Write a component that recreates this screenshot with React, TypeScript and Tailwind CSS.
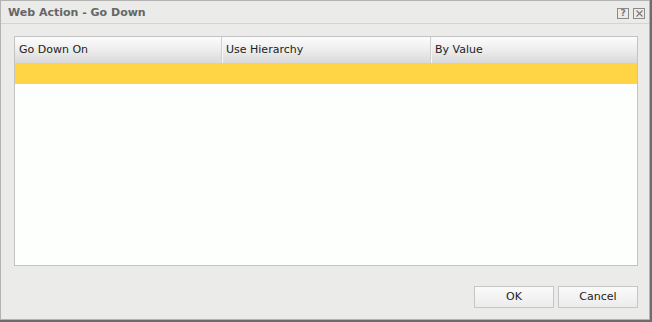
import React from "react";

const font = { fontFamily: '"DejaVu Sans", Verdana, sans-serif' };

function HeaderCell({ label, last }: { label: string; last?: boolean }) {
  return (
    <div
      className={`flex h-full items-center pl-[4px] text-[11px] text-[#222] ${
        last ? "flex-1" : "border-r border-r-[#cfcfcf] shadow-[1px_0_0_#f7f7f7]"
      }`}
    >
      {label}
    </div>
  );
}

export default function App() {
  return (
    <div className="h-[322px] w-[652px] overflow-hidden" style={font}>
      <div className="flex h-full w-full flex-col border-b-2 border-r-2 border-b-[#6c6c6c] border-r-[#6c6c6c]">
        <div className="flex h-full w-full flex-col border border-[#b3b3b3] bg-[#ebebe9]">
          {/* Title bar */}
          <div className="flex h-[23px] shrink-0 items-center justify-between border-b border-b-[#d4d4d2] pl-[7px] pr-[4px] pt-[3px]">
            <span className="text-[11px] font-bold text-[#666]">Web Action - Go Down</span>
            <div className="flex items-center gap-[4px]">
              <div className="flex h-[11px] w-[12px] items-center justify-center border border-[#8a8a8a] text-[9px] font-bold leading-none text-[#777]">
                ?
              </div>
              <div className="flex h-[11px] w-[12px] items-center justify-center border border-[#8a8a8a]">
                <svg width="7" height="7" viewBox="0 0 7 7">
                  <path d="M0.5 0.5 L6.5 6.5 M6.5 0.5 L0.5 6.5" stroke="#777" strokeWidth="1.1" />
                </svg>
              </div>
            </div>
          </div>

          {/* Body */}
          <div className="flex flex-1 flex-col pl-[13px] pr-[11px] pt-[12px]">
            <div className="flex h-[230px] flex-col border border-[#c3c3c3] bg-[#fdfffc]">
              <div className="flex h-[27px] shrink-0 border-b border-b-[#cfcfcf] bg-gradient-to-b from-[#fcfcfc] via-[#ededed] to-[#d9d9d9]">
                <div className="w-[207px]">
                  <HeaderCell label="Go Down On" />
                </div>
                <div className="w-[209px]">
                  <HeaderCell label="Use Hierarchy" />
                </div>
                <div className="flex flex-1">
                  <HeaderCell label="By Value" last />
                </div>
              </div>
              <div className="h-[20px] bg-[#ffd546]" />
            </div>

            <div className="mt-[20px] flex justify-end gap-[4px]">
              <button className="h-[22px] w-[80px] border border-[#c6c6c6] bg-gradient-to-b from-[#fafafa] to-[#ececec] text-[11px] text-[#222]">
                OK
              </button>
              <button className="h-[22px] w-[80px] border border-[#c6c6c6] bg-gradient-to-b from-[#fafafa] to-[#ececec] text-[11px] text-[#222]">
                Cancel
              </button>
            </div>
          </div>
        </div>
      </div>
    </div>
  );
}
